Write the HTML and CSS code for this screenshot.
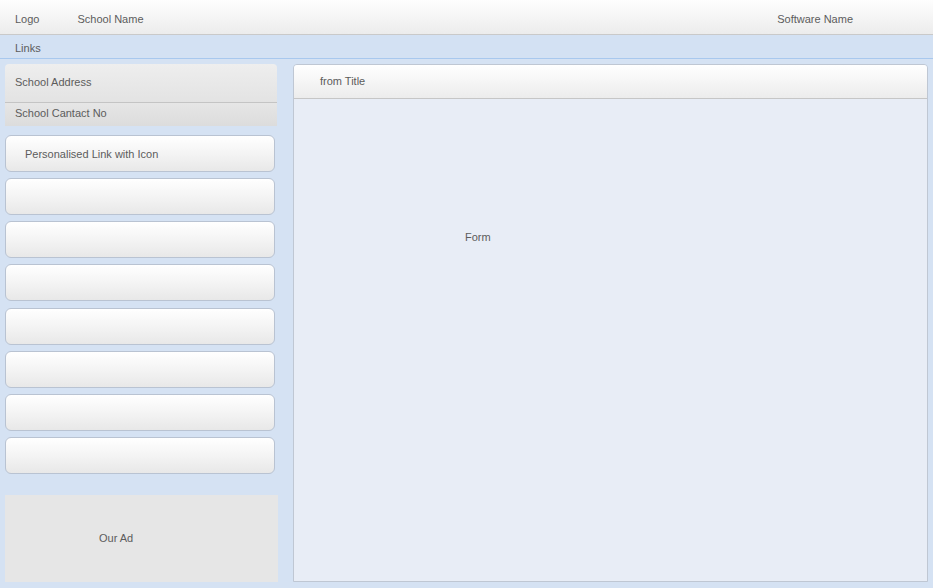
FILE: index.html
```html
<!DOCTYPE html>
<html>
<head>
<meta charset="utf-8">
<link rel="stylesheet" href="styles.css">
</head>
<body>
<header class="topbar">
  <span class="logo">Logo</span>
  <span class="school">School Name</span>
  <span class="software">Software Name</span>
</header>
<nav class="linksbar">Links</nav>
<main class="main">
  <aside class="side">
    <div class="info">
      <div class="info-addr">School Address</div>
      <div class="info-contact">School Cantact No</div>
    </div>
    <div class="links">
      <div class="link">Personalised Link with Icon</div>
      <div class="link"></div>
      <div class="link"></div>
      <div class="link"></div>
      <div class="link"></div>
      <div class="link"></div>
      <div class="link"></div>
      <div class="link"></div>
    </div>
    <div class="ad">Our Ad</div>
  </aside>
  <section class="panel">
    <div class="panel-title">from Title</div>
    <div class="panel-body"><span class="form-label">Form</span></div>
  </section>
</main>
</body>
</html>
```
FILE: styles.css
```css
html, body {
  margin: 0;
  padding: 0;
}
body {
  width: 933px;
  height: 588px;
  overflow: hidden;
  background: #d5e2f3;
  font-family: "Liberation Sans", Arial, sans-serif;
  font-size: 11px;
  color: #5c5c5c;
}
.topbar {
  display: flex;
  align-items: center;
  padding: 3px 0 0 15px;
  height: 31px;
  background: linear-gradient(#fefefe, #ececec);
  border-bottom: 1px solid #c9c9c9;
}
.school {
  margin-left: 38px;
}
.software {
  margin-left: auto;
  margin-right: 80px;
}
.linksbar {
  height: 23px;
  line-height: 26px;
  padding-left: 15px;
  background: #d3e1f3;
  border-bottom: 1px solid #a8c8ee;
}
.main {
  display: flex;
  gap: 16px;
  padding: 5px 5px 0 5px;
}
.side {
  width: 272px;
  display: flex;
  flex-direction: column;
}
.info {
  border-radius: 4px 4px 0 0;
  overflow: hidden;
  margin-bottom: 9px;
}
.info-addr {
  height: 38px;
  line-height: 36px;
  padding-left: 10px;
  background: linear-gradient(#eeeeee, #e3e3e3);
  border-bottom: 1px solid #c4c4c4;
}
.info-contact {
  height: 23px;
  line-height: 20px;
  padding-left: 10px;
  background: linear-gradient(#e6e6e6, #dcdcdc);
}
.links {
  display: flex;
  flex-direction: column;
  gap: 6.15px;
  width: 270px;
}
.link {
  height: 35px;
  line-height: 36px;
  padding-left: 19px;
  border: 1px solid #b9c3d2;
  border-radius: 6px;
  background: linear-gradient(#ffffff, #f4f4f4 50%, #e8e8e8);
}
.ad {
  margin-top: 21px;
  width: 273px;
  height: 87px;
  background: #e6e6e6;
  display: flex;
  align-items: center;
  padding-left: 94px;
  box-sizing: border-box;
}
.panel {
  flex: 1;
  height: 518px;
  display: flex;
  flex-direction: column;
  border: 1px solid #bfc7d3;
  border-radius: 4px 4px 0 0;
  overflow: hidden;
  box-sizing: border-box;
}
.panel-title {
  height: 33px;
  line-height: 33px;
  padding-left: 26px;
  background: linear-gradient(#ffffff, #ececec);
  border-bottom: 1px solid #c6c6c6;
  flex-shrink: 0;
}
.panel-body {
  flex: 1;
  background: #e8edf6;
  padding: 132px 0 0 171px;
}
```
